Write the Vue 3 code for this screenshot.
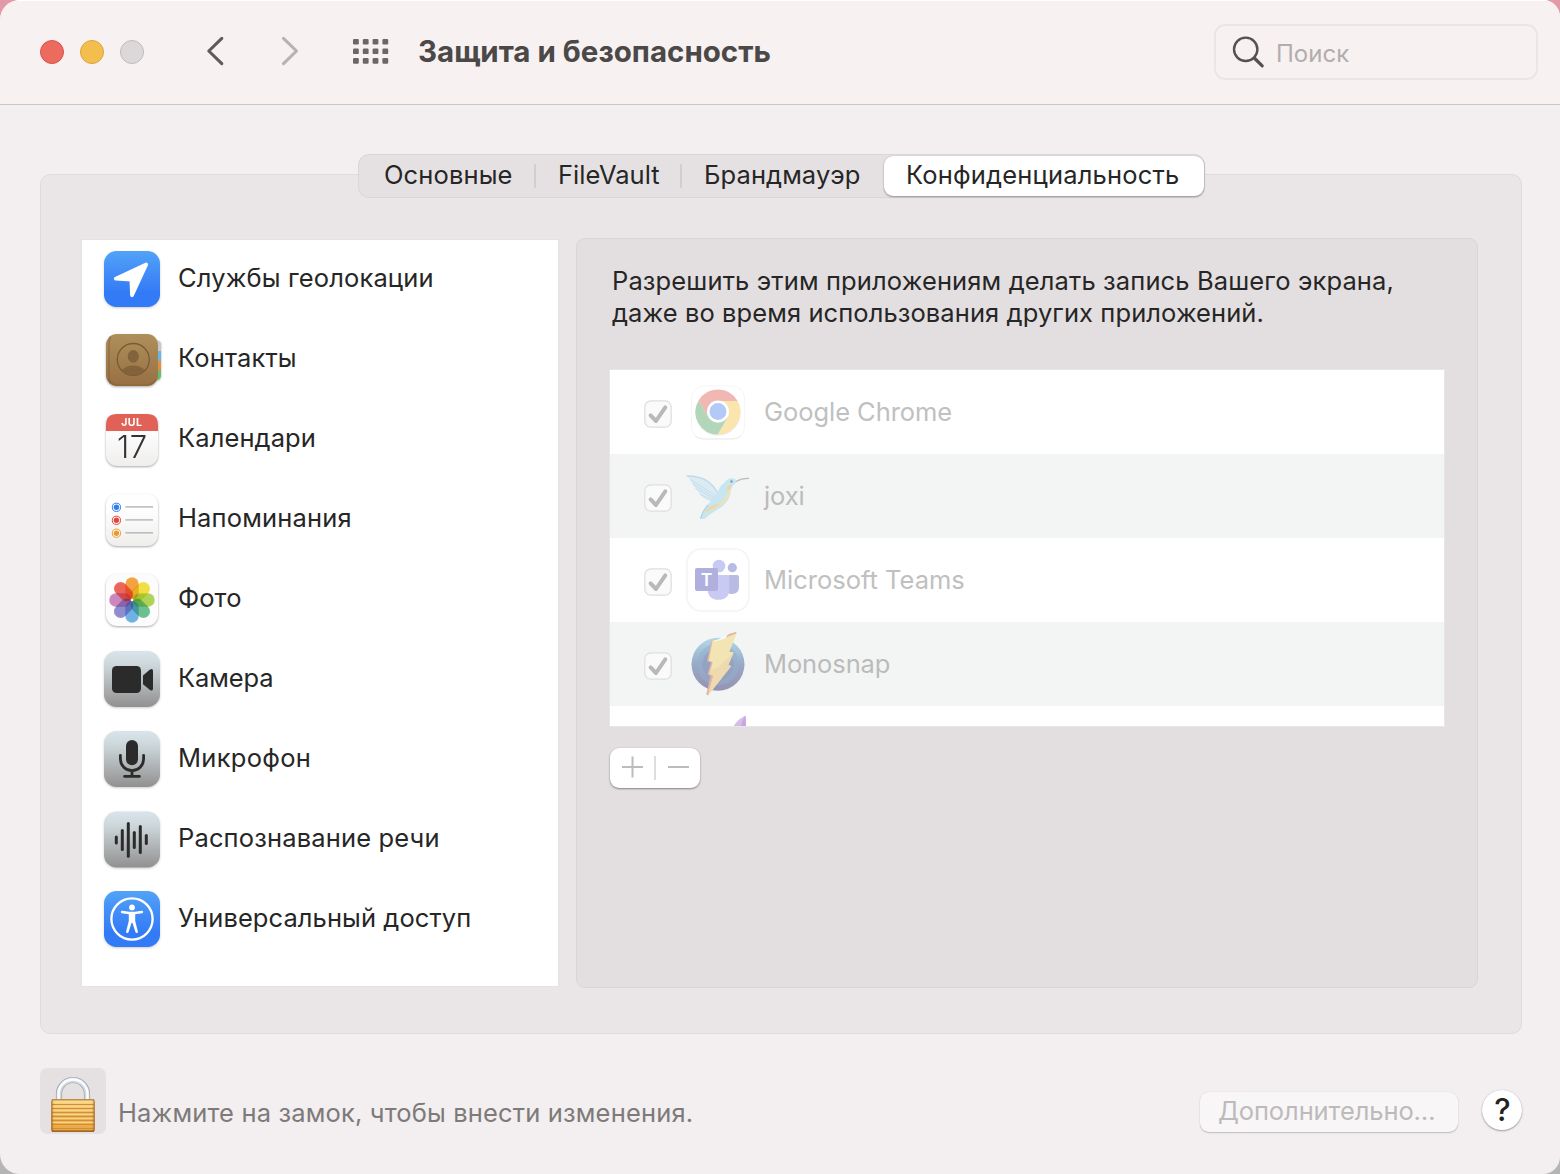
<script setup>
const services = [
  { id: 'location', label: 'Службы геолокации', track: 0.14 },
  { id: 'contacts', label: 'Контакты', track: 0.15 },
  { id: 'calendar', label: 'Календари', track: 0.1 },
  { id: 'reminders', label: 'Напоминания', track: 0.17 },
  { id: 'photos', label: 'Фото', track: 0.1 },
  { id: 'camera', label: 'Камера', track: -0.1 },
  { id: 'mic', label: 'Микрофон', track: 0.3 },
  { id: 'speech', label: 'Распознавание речи', track: 0.15 },
  { id: 'access', label: 'Универсальный доступ', track: 0.08 },
]
const apps = [
  { id: 'chrome', label: 'Google Chrome', track: -0.05 },
  { id: 'joxi', label: 'joxi', track: -0.1 },
  { id: 'teams', label: 'Microsoft Teams', track: 0 },
  { id: 'monosnap', label: 'Monosnap', track: -0.1 },
  { id: 'flame', label: '', track: 0 },
]
const petals = ['#f19a2c', '#efdc2f', '#a6cf46', '#5cb885', '#62a8e0', '#8280c8', '#c47ab8', '#ec5548']
const bars = [
  [16.3, 37, 43], [22.3, 30.5, 49.5], [28.3, 23.5, 56.3],
  [34.3, 32.5, 47.5], [40.3, 26.5, 52.5], [46.3, 35.5, 43.5],
]
const reminderDots = [[27.3, '#2f7cf0'], [40.3, '#e2453a'], [53.2, '#eb9a2d']]
</script>

<template>
  <div class="window">
    <header class="titlebar">
      <div class="lights"><i class="red"></i><i class="yellow"></i><i class="gray"></i></div>
      <svg class="nav" width="200" height="40" viewBox="200 32 200 40" fill="none">
        <path d="M221.800 38.300 208.800 51l13 12.700" stroke="#5f5a5b" stroke-width="3.100" stroke-linecap="round" stroke-linejoin="round" />
        <path d="M283.500 38.300 296.500 51l-13 12.700" stroke="#b7b2b3" stroke-width="3.100" stroke-linecap="round" stroke-linejoin="round" />
        <g fill="#6c6667">
          <template v-for="r in 3" :key="r">
            <rect v-for="c in 4" :key="c" :x="343.2 + c * 9.8" :y="29.3 + r * 9.6" width="5.800" height="5.600" rx="1.200" />
          </template>
        </g>
      </svg>
      <h1>Защита и безопасность</h1>
      <div class="search">
        <svg width="36" height="36" viewBox="0 0 36 36" fill="none" stroke="#555152" stroke-linecap="round">
          <circle cx="15.700" cy="15.300" r="11.700" stroke-width="2.400" />
          <path d="M24.300 24 32.200 31.900" stroke-width="3.200" />
        </svg>
        <span>Поиск</span>
      </div>
    </header>

    <nav class="tabs">
      <div class="tab t1"><span>Основные</span></div>
      <div class="tab t2"><span>FileVault</span></div>
      <div class="tab t3"><span>Брандмауэр</span></div>
      <div class="tab t4"><span>Конфиденциальность</span></div>
    </nav>

    <main class="pane">
      <ul class="services">
        <li v-for="s in services" :key="s.id">
          <svg width="64" height="80" viewBox="0 0 64 80" :class="s.id === 'contacts' || s.id === 'calendar' || s.id === 'reminders' || s.id === 'photos' ? 'raised' : 'flat'">
            <defs>
              <linearGradient :id="s.id + '-blue'" x2="0" y2="1"><stop stop-color="#52a2f8" /><stop offset=".75" stop-color="#337af6" /></linearGradient>
              <linearGradient :id="s.id + '-steel'" x2="0" y2="1"><stop stop-color="#d9e5eb" /><stop offset=".25" stop-color="#cdd7db" /><stop offset="1" stop-color="#929090" /></linearGradient>
              <linearGradient :id="s.id + '-paper'" x2="0" y2="1"><stop offset=".3" stop-color="#fefefe" /><stop offset="1" stop-color="#efeeed" /></linearGradient>
              <linearGradient :id="s.id + '-leather'" x2="0" y2="1"><stop stop-color="#ae905b" /><stop offset="1" stop-color="#986f43" /></linearGradient>
            </defs>
            <template v-if="s.id === 'location'">
              <rect x="4" y="11" width="56" height="56" rx="12.500" fill="url(#location-blue)" />
              <path d="M46.200 24.500 15.800 38.600 31.400 39.500 32 55.300Z" fill="#fff" stroke="#fff" stroke-width="3.800" stroke-linejoin="round" />
            </template>
            <template v-else-if="s.id === 'contacts'">
              <path d="M50 20.500h7q4 0 4 4V32H50z" fill="#c9c8c4" />
              <path d="M50 31h11v11H50z" fill="#6ab6e0" />
              <path d="M50 41h11v10H50z" fill="#e58d38" />
              <path d="M50 50h11v5q0 5-5 5h-6z" fill="#68bb6a" />
              <rect x="6" y="14" width="52" height="52" rx="11" fill="url(#contacts-leather)" />
              <path d="M10.500 16.500q-1.500 3-1.500 9v29q0 6 1.500 9" fill="none" stroke="#7e5d34" stroke-width="2" opacity=".4" />
              <path d="M8 59q3 6 10 6h28q7 0 10.500-6" fill="none" stroke="#7d5933" stroke-width="1.200" opacity=".45" />
              <circle cx="33.300" cy="39.500" r="16" fill="none" stroke="#795b35" stroke-width="1.300" />
              <ellipse cx="33.300" cy="36.400" rx="5.600" ry="6.300" fill="#82633b" />
              <path d="M22 50.500q4-5 11.300-5t11.300 5q-4.500 5-11.300 5t-11.300-5z" fill="#82633b" />
            </template>
            <template v-else-if="s.id === 'calendar'">
              <rect x="6" y="14" width="52" height="52" rx="11" fill="url(#calendar-paper)" />
              <path d="M6 31v-6q0-11 11-11h30q11 0 11 11v6z" fill="#e26157" />
              <text x="31.800" y="26.100" text-anchor="middle" font-size="10.500" font-weight="700" letter-spacing=".4" fill="#fff">JUL</text>
              <text x="32" y="57.500" text-anchor="middle" font-size="31" font-weight="300" textLength="30" fill="#333">17</text>
            </template>
            <template v-else-if="s.id === 'reminders'">
              <rect x="6" y="14" width="52" height="52" rx="11" fill="url(#reminders-paper)" />
              <g v-for="d in reminderDots" :key="d[0]">
                <circle cx="16.400" :cy="d[0]" r="4.100" fill="#fff" :stroke="d[1]" stroke-width="1" />
                <circle cx="16.400" :cy="d[0]" r="2.700" :fill="d[1]" />
                <path :d="`M25.300 ${d[0] - 0.4}H53`" stroke="#b9b9bb" stroke-width="1.500" />
              </g>
            </template>
            <template v-else-if="s.id === 'photos'">
              <rect x="6" y="14" width="52" height="52" rx="11" fill="#fcfcfc" />
              <g class="flower">
                <rect v-for="(p, i) in petals" :key="p" x="25.300" y="17.200" width="13.400" height="22" rx="6.700" :fill="p" fill-opacity=".85" :transform="`rotate(${i * 45} 32 40)`" />
              </g>
              <g opacity=".35">
                <rect v-for="(p, i) in petals" :key="p" x="26.500" y="18.500" width="11" height="20" rx="5.500" :fill="p" :transform="`rotate(${i * 45} 32 40)`" />
              </g>
              <circle cx="32" cy="40" r="1.300" fill="#fff" />
            </template>
            <template v-else-if="s.id === 'camera'">
              <rect x="4" y="11" width="56" height="56" rx="12.500" fill="url(#camera-steel)" />
              <rect x="12" y="26" width="29" height="27" rx="4.500" fill="#2b2b2b" />
              <path d="M43 35.500 50 29.600q3-1.500 3 1.500v17.500q0 3-3 1.500L43 44.200z" fill="#2b2b2b" />
            </template>
            <template v-else-if="s.id === 'mic'">
              <rect x="4" y="11" width="56" height="56" rx="12.500" fill="url(#mic-steel)" />
              <rect x="26" y="20" width="12" height="25.300" rx="6" fill="#2b2b2b" />
              <path d="M20.400 35.300v3.700a11.600 11.600 0 0 0 23.200 0v-3.700M32 50.600v5.800M24.600 56.400h14.800" fill="none" stroke="#2b2b2b" stroke-width="2.800" stroke-linecap="round" />
            </template>
            <template v-else-if="s.id === 'speech'">
              <rect x="4" y="11.500" width="56" height="56" rx="12.500" fill="url(#speech-steel)" />
              <path v-for="b in bars" :key="b[0]" :d="`M${b[0]} ${b[1]}V${b[2]}`" stroke="#2b2b2b" stroke-width="3" stroke-linecap="round" />
            </template>
            <template v-else>
              <rect x="4" y="11" width="56" height="56" rx="12.500" fill="url(#access-blue)" />
              <circle cx="32" cy="39" r="20.600" fill="none" stroke="#fff" stroke-width="2.300" />
              <circle cx="32" cy="27.400" r="2.900" fill="#fff" />
              <path d="M22 32 29 33h6l7-1" fill="none" stroke="#fff" stroke-width="2.300" stroke-linecap="round" stroke-linejoin="round" />
              <path d="M28.800 32.500h6.400v8.500l2.700 10.500q.2 1.600-1.200 1.600-1 0-1.300-1L32.500 43h-1l-2.900 9.100q-.3 1-1.300 1-1.400 0-1.200-1.600L28.800 41z" fill="#fff" />
            </template>
          </svg>
          <span :style="{ letterSpacing: s.track + 'px' }">{{ s.label }}</span>
        </li>
      </ul>

      <section class="detail">
        <p><span class="l1">Разрешить этим приложениям делать запись Вашего экрана,</span><br /><span class="l2">даже во время использования других приложений.</span></p>
        <div class="table">
          <div v-for="a in apps" :key="a.id" class="app">
            <svg v-if="a.label" class="check" width="28" height="28" viewBox="0 0 28 28" fill="none">
              <rect x=".8" y=".8" width="26.400" height="26.400" rx="6" fill="#fafafa" stroke="#dedede" stroke-width="1.200" />
              <path d="M6.600 15.400 12 21 21.300 7.300" stroke="#b9b9b9" stroke-width="4" stroke-linecap="round" stroke-linejoin="round" />
            </svg>
            <i v-else class="check"></i>
            <svg class="logo" width="64" height="84" viewBox="0 0 64 84">
              <template v-if="a.id === 'chrome'">
                <rect x="5.500" y="16" width="53" height="53" rx="12" fill="#fff" stroke="#f5f5f5" />
                <path d="M9 66q3 3 9 3h28q6 0 9-3" fill="none" stroke="#ebebeb" />
                <g opacity=".38" transform="translate(32 42)">
                  <circle cy="1" r="22.600" fill="#999" opacity=".5" />
                  <path d="M-19.400-11.500A22.500 22.500 0 0 1 19.600-11H0L-9.500 5.500Z" fill="#dc4437" />
                  <path d="M19.600-11A22.500 22.500 0 0 1-.3 22.500L9.500 5.500 0-11Z" fill="#f6bd2f" />
                  <path d="M-.3 22.500A22.500 22.500 0 0 1-19.400-11.500L-9.500 5.500 0 11 9.500 5.500Z" fill="#37964b" />
                </g>
                <circle cx="32" cy="41.500" r="11" fill="#fff" />
                <circle cx="32" cy="41.500" r="8.500" fill="#b3caf7" />
              </template>
              <template v-else-if="a.id === 'joxi'">
                <path d="M.7 22q14-.5 22.500 6.500 6 5 8.500 11l-2.700 9.200q-9-1.500-15-8L6.500 30Q4 25 .7 22Z" fill="#dcebf2" />
                <path d="M.7 22q14-.5 22.500 6.500 6 5 8.500 11" fill="none" stroke="#b9dcec" stroke-width="1.400" />
                <path d="M4 25.500l25.500 16M6.500 30 29 43.500M9.500 34.500 28.500 45M14 40.500 28.500 47" fill="none" stroke="#c3dfec" stroke-width="1" />
                <path d="M49.500 29.200Q45 32 44.500 39 43 48 34 54 24 60 18.500 65H14Q16 57 22 50.500L32 39q1-7 6.500-10.500 4-5.500 9-4 3 1 3.500 3Z" fill="#c8e5f2" />
                <path d="M45 32Q42 35 41 40 38 48 29 51 20 54.500 18.500 60 27 54.500 35 51 44 44.500 44 36Z" fill="#f3e2b0" />
                <path d="M41.500 32q3-1.500 4-.5-1 4-3.500 5-1.500-1-.5-4.500ZM19 59q2-6 11-8.500 3-.8 5-2.500Q32 53 26 55Z" fill="#efd4a4" />
                <path d="M22 51 17 58l-2.500 6.500" fill="none" stroke="#add5ea" stroke-width="1.300" />
                <path d="M50 27.500Q56 24 63 24.300" fill="none" stroke="#b9bdbb" stroke-width="1.200" />
                <circle cx="45.500" cy="27.500" r="1.300" fill="#8b9fa8" />
              </template>
              <template v-else-if="a.id === 'teams'">
                <rect x="1" y="11" width="62" height="62" rx="14" fill="#fff" stroke="#f4f4f4" stroke-width="1.600" />
                <circle cx="33" cy="28" r="6.300" fill="#c9caf4" />
                <circle cx="46.300" cy="29.700" r="4.600" fill="#b8bbe5" />
                <path d="M42.500 37H51q2 0 2 2v10q0 7-7 7-3 0-4-1Z" fill="#b8bbe5" />
                <path d="M21.700 37h19.600q2 0 2 2v12q0 10.800-10.800 10.800T21.700 51Z" fill="#c9caf4" />
                <rect x="9" y="30" width="23" height="23" rx="2" fill="#afb0de" />
                <text x="20.500" y="48" text-anchor="middle" font-size="17.500" font-weight="600" fill="#fff">T</text>
              </template>
              <template v-else-if="a.id === 'monosnap'">
                <defs><linearGradient id="orb" x2="0" y2="1"><stop stop-color="#b2d9e9" /><stop offset=".5" stop-color="#98aac5" /><stop offset="1" stop-color="#9592b2" /></linearGradient></defs>
                <circle cx="32" cy="42.300" r="26.500" fill="url(#orb)" />
                <circle cx="32" cy="42.300" r="21" fill="#94adcb" opacity=".5" />
                <circle cx="32" cy="42.300" r="15.500" fill="#939dbf" opacity=".65" />
                <path d="m25.500 19 3-2L25 39l3 1-3.500 12 3 1-5 20.500-2.200-1L24.500 54l-3-1.500 3.500-12-4-1.500Z" fill="#deb5a5" />
                <path d="M40 14.500 43 12l7-2 .7 1.500L40 16z" fill="#dfb3a6" />
                <path d="M26.500 19 41 15l9.500-3.500L43.300 30l4.500.2-5.500 13.100 3 .7L22 73.500 27.300 53.500l-4-1.500 3.400-12-4-1Z" fill="#f2e4b3" />
                <path d="M32 45 47 31.500 42.300 43.300l3 .7L22 73.500 27.300 53.500l-4-1.500 1.700-4Z" fill="#eed9b1" />
                <path d="M25.500 19Q33 18.300 38 14.300l3-.3-2 2.500-10 3z" fill="#fafafa" />
              </template>
              <template v-else>
                <path d="M59.500 9.500Q52 13 47 21H60Z" fill="#d4bde8" /><path d="M59.500 9.500Q56 14 55 21H60Z" fill="#c8a5df" />
              </template>
            </svg>
            <span :style="{ letterSpacing: a.track + 'px' }">{{ a.label }}</span>
          </div>
        </div>
        <div class="addremove">
          <svg width="90" height="40" viewBox="0 0 90 40" fill="none" stroke-width="2">
            <path d="M12 19h21M22.500 8.500v21M58 19h21" stroke="#bcbcbc" />
            <path d="M45 8v24" stroke="#dedede" />
          </svg>
        </div>
      </section>
    </main>

    <footer class="footer">
      <div class="lock">
        <svg width="66" height="66" viewBox="0 0 66 66">
          <defs>
            <linearGradient id="brass" x2="0" y2="1"><stop stop-color="#f9d98c" /><stop offset=".5" stop-color="#edb255" /><stop offset="1" stop-color="#e9a842" /></linearGradient>
            <linearGradient id="brassedge"><stop stop-color="#7d3e0b" stop-opacity=".75" /><stop offset=".06" stop-color="#a8641c" stop-opacity="0" /><stop offset=".94" stop-color="#a8641c" stop-opacity="0" /><stop offset="1" stop-color="#7d3e0b" stop-opacity=".75" /></linearGradient>
          </defs>
          <path d="M19 32V26a14 14 0 0 1 28 0v6" fill="none" stroke="#98a0a8" stroke-width="6.200" />
          <path d="M19 32V26a14 14 0 0 1 28 0v6" fill="none" stroke="#d3dae0" stroke-width="4.800" />
          <path d="M18.500 32V26a14.500 14.500 0 0 1 29 0v6" fill="none" stroke="#fbfdfe" stroke-width="2.400" />
          <rect x="11.300" y="31.300" width="43.400" height="32.400" rx="1.800" fill="url(#brass)" />
          <path d="M12 36.500h42M12 40.500h42M12 44.500h42M12 48.500h42M12 52.500h42M12 56.500h42M12 60.500h42" stroke="#cf8e3a" stroke-width="1" />
          <path d="M12 34h42M12 38.300h42M12 42.300h42M12 46.300h42M12 50.300h42M12 54.300h42" stroke="#fbdc92" stroke-width="1" />
          <rect x="11.300" y="31.300" width="43.400" height="32.400" rx="1.800" fill="url(#brassedge)" />
          <path d="M12 31.800h42" stroke="#a56b22" stroke-width="1" /><path d="M12 63.100h42" stroke="#8a4a12" stroke-width="1.400" />
        </svg>
      </div>
      <span class="hint">Нажмите на замок, чтобы внести изменения.</span>
      <button class="more"><span>Дополнительно…</span></button>
      <button class="help"><span>?</span></button>
    </footer>
  </div>
</template>

<style>
body {
  margin: 0;
  background: linear-gradient(#e39aa8 0, #e39aa8 60px, #b5b5b5 1100px, #b5b5b5);
}
</style>

<style scoped>
.window {
  box-sizing: border-box;
  width: 1560px;
  height: 1174px;
  overflow: hidden;
  border-radius: 20px 17px 17px 20px;
  background: #f3eeef;
  font-family: Inter, "Liberation Sans", sans-serif;
  font-size: 25.5px;
  color: #262626;
  display: flex;
  flex-direction: column;
  white-space: nowrap;
}
.titlebar {
  box-sizing: border-box;
  height: 105px;
  flex: none;
  display: flex;
  align-items: flex-start;
  background: #f7f1f1;
  border-bottom: 1px solid #cbc7c8;
  box-shadow: inset 0 1px #fff;
  padding: 0 22px 0 40px;
}
.lights { display: flex; gap: 16px; margin-top: 40px; }
.lights i { box-sizing: border-box; width: 24px; height: 24px; border-radius: 50%; border: 1px solid; }
.lights .red { background: #ed6a5e; border-color: #d5544a; }
.lights .yellow { background: #f4be4f; border-color: #d9a33d; }
.lights .gray { background: #dcd8d9; border-color: #c0bbbc; }
.nav { margin: 32px 0 0 56px; }
h1 { margin: 31px 0 0 18px; font-size: 29.5px; line-height: 40px; font-weight: 700; color: #4b4848; }
.search {
  box-sizing: border-box;
  margin: 24px 0 0 auto;
  width: 324px;
  height: 56px;
  border: 2px solid #ebe5e6;
  border-radius: 11px;
  display: flex;
  align-items: center;
  padding-left: 14px;
  color: #b2adae;
}
.search span { margin: 2px 0 0 10px; font-size: 24px; }

.tabs {
  position: relative;
  z-index: 1;
  box-sizing: border-box;
  width: 847px;
  height: 44px;
  margin: 49px 0 0 358px;
  flex: none;
  display: flex;
  border: 1px solid #dad6d7;
  border-radius: 11px;
  background: #e5e1e2;
}
.tab { display: flex; position: relative; line-height: 40px; box-sizing: border-box; }
.t1 { width: 177px; padding-left: 25px; letter-spacing: 0.12px; }
.t2 { width: 146px; padding-left: 22px; }
.t3 { width: 202px; padding-left: 22px; letter-spacing: 0.08px; }
.t4 { width: 320px; height: 40px; margin-top: 1px; padding-left: 22px; line-height: 38px; letter-spacing: 0.18px; background: #fff; border-radius: 9px; box-shadow: 0 1px 2px #0005, 0 0 1px #0004; }
.t1::after, .t2::after { content: ""; position: absolute; right: 0; top: 9px; width: 2px; height: 24px; background: #d2cecf; }

.pane {
  box-sizing: border-box;
  width: 1482px;
  height: 860px;
  margin: -24px 0 0 40px;
  flex: none;
  display: flex;
  gap: 17px;
  padding: 63px 0 0 40px;
  border: 1px solid #dfdbdc;
  border-radius: 10px;
  background: #eae6e7;
}
.services {
  box-sizing: border-box;
  list-style: none;
  margin: 1px 0 0;
  padding: 0 0 0 18px;
  width: 478px;
  height: 748px;
  border: 1px solid #e3e3e3;
  background: #fff;
}
.services li { height: 80px; display: flex; }
.services li > span { margin-left: 14px; line-height: 75px; }
.raised { filter: drop-shadow(0 1.5px 1px #0005); }
.flat { filter: drop-shadow(0 1px 1px #0003); }
.flower { isolation: isolate; }
.flower rect { mix-blend-mode: multiply; }

.detail {
  box-sizing: border-box;
  width: 902px;
  height: 750px;
  padding: 26px 0 0 33px;
  border: 1px solid #d9d5d6;
  border-radius: 9px;
  background: #e3dfe0;
}
.detail p { margin: 0 0 0 2px; line-height: 32px; }
.l1 { letter-spacing: 0.13px; }
.l2 { letter-spacing: 0.09px; }
.table {
  width: 834px;
  height: 356px;
  margin: 40px 0 0 -1px;
  border: 1px solid #e6e6e6;
  overflow: hidden;
  background: #fff;
}
.app { height: 84px; display: flex; align-items: center; color: #c0c0c0; }
.app:nth-child(even) { background: #f3f5f4; color: #bbb; }
.check { width: 28px; margin: 4px 0 0 34px; }
.logo { margin-left: 14px; }
.app span { margin: -2px 0 0 14px; }
.addremove { width: 90px; height: 40px; margin-top: 21px; border-radius: 9px; background: #fff; box-shadow: 0 1px 2px #0006, 0 0 1px #0003; }
.addremove svg { display: block; }

.footer { display: flex; align-items: flex-start; padding: 34px 38px 0 40px; }
.lock { width: 66px; height: 66px; border-radius: 7px; background: #e5e1e2; }
.lock svg { display: block; }
.hint { margin: 25px 0 0 12px; line-height: 40px; letter-spacing: 0.16px; color: #7d7a7a; }
button { border: 0; padding: 0; font: inherit; }
.more {
  box-sizing: border-box;
  width: 258px;
  height: 40px;
  margin: 24px 0 0 auto;
  border-radius: 9px;
  background: #f9f6f7;
  color: #bdbabb;
  text-align: left;
  padding: 0 0 2px 18px;
  line-height: 38px;
  letter-spacing: -0.1px;
  box-shadow: 0 1px 1.5px #0003, 0 0 1px #0002;
}
.help {
  width: 40px;
  height: 40px;
  margin: 22px 0 0 24px;
  border-radius: 50%;
  background: #fff;
  color: #222;
  font-size: 31px;
  font-weight: 500;
  line-height: 40px;
  text-indent: 1px;
  box-shadow: 0 1px 2px #0005, 0 0 1px #0003;
}
</style>
